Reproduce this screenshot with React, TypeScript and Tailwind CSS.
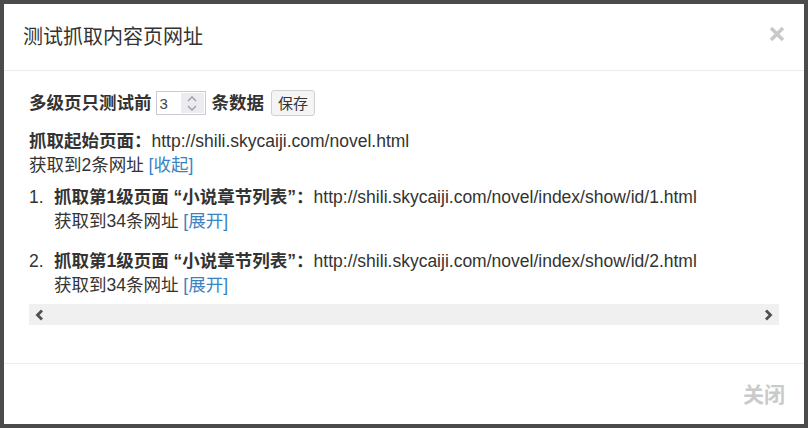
import React from 'react';

const FONT = '"Liberation Sans", "Noto Sans CJK SC", sans-serif';

function ChevronLeft() {
  return (
    <svg width="9" height="12" viewBox="0 0 9 12" fill="none">
      <polyline points="7,1.5 2.5,6 7,10.5" stroke="#505050" strokeWidth="2.8" />
    </svg>
  );
}

function ChevronRight() {
  return (
    <svg width="9" height="12" viewBox="0 0 9 12" fill="none">
      <polyline points="2,1.5 6.5,6 2,10.5" stroke="#505050" strokeWidth="2.8" />
    </svg>
  );
}

function NumberInput({ value }: { value: string }) {
  return (
    <div className="flex h-[24px] w-[50px] items-stretch border border-[#c9c9d3] bg-white">
      <span className="flex flex-1 items-center pl-[3px] text-[15px] leading-none text-[#444]">
        {value}
      </span>
      <span className="my-[1px] mr-[1px] flex w-[23px] flex-col items-center justify-center gap-[3px] bg-[#ebebf0]">
        <svg width="10" height="6" viewBox="0 0 10 6" fill="none">
          <polyline points="1,5 5,1 9,5" stroke="#9a9aa8" strokeWidth="1.3" />
        </svg>
        <svg width="10" height="6" viewBox="0 0 10 6" fill="none">
          <polyline points="1,1 5,5 9,1" stroke="#9a9aa8" strokeWidth="1.3" />
        </svg>
      </span>
    </div>
  );
}

type Level = {
  label: string;
  url: string;
  count: number;
};

const levels: Level[] = [
  { label: '抓取第1级页面 “小说章节列表”：', url: 'http://shili.skycaiji.com/novel/index/show/id/1.html', count: 34 },
  { label: '抓取第1级页面 “小说章节列表”：', url: 'http://shili.skycaiji.com/novel/index/show/id/2.html', count: 34 },
];

export default function App() {
  return (
    <div className="h-[428px] w-[808px] bg-[#4b4b4b] p-[4px]" style={{ fontFamily: FONT }}>
      <div className="flex h-[420px] w-[800px] flex-col bg-white text-[#333]">
        <header className="flex h-[67px] items-center justify-between border-b border-[#ececec] pl-[19px] pr-[19px]">
          <h4 className="text-[20px] leading-none text-[#333]">测试抓取内容页网址</h4>
          <button type="button" aria-label="关闭" className="-mt-[6px]">
            <svg width="16" height="16" viewBox="0 0 16 16" fill="none">
              <path d="M2 2 L14 14 M14 2 L2 14" stroke="#c9c9c9" strokeWidth="3.6" />
            </svg>
          </button>
        </header>

        <div className="flex-1 px-[25px] pt-[19px] text-[17.5px] leading-[24px]">
          <div className="flex items-center">
            <b className="font-bold">多级页只测试前</b>
            <span className="ml-[4px]">
              <NumberInput value="3" />
            </span>
            <b className="ml-[6px] font-bold">条数据</b>
            <button
              type="button"
              className="ml-[7px] h-[26px] w-[44px] rounded-[3px] border border-[#d0d0d0] bg-[#f4f4f4] text-[15px] leading-none text-[#333]"
            >
              保存
            </button>
          </div>

          <div className="mt-[13px]">
            <div>
              <b className="font-bold">抓取起始页面：</b>
              <span>http://shili.skycaiji.com/novel.html</span>
            </div>
            <div>
              获取到2条网址 <a className="text-[#3a83c2]">[收起]</a>
            </div>
          </div>

          <ol className="mt-[8px] flex flex-col gap-[16px]">
            {levels.map((level, i) => (
              <li key={i} className="flex">
                <span className="w-[25px] shrink-0">{i + 1}.</span>
                <div>
                  <div className="whitespace-nowrap">
                    <b className="font-bold">{level.label}</b>
                    <span>{level.url}</span>
                  </div>
                  <div>
                    获取到{level.count}条网址 <a className="text-[#3a83c2]">[展开]</a>
                  </div>
                </div>
              </li>
            ))}
          </ol>

          <div className="mt-[7px] flex h-[21px] items-center justify-between bg-[#f0f0f0] px-[6px]">
            <ChevronLeft />
            <ChevronRight />
          </div>
        </div>

        <footer className="flex h-[61px] items-center justify-end border-t border-[#ececec] pr-[19px]">
          <button type="button" className="text-[21px] font-bold leading-none text-[#cacaca]">
            关闭
          </button>
        </footer>
      </div>
    </div>
  );
}
